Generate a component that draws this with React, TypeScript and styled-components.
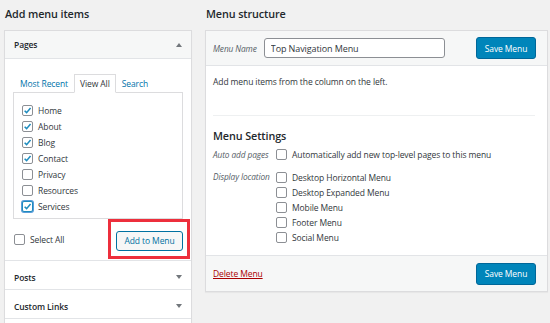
import React from 'react';
import styled, { createGlobalStyle, css } from 'styled-components';

const GlobalStyle = createGlobalStyle`
  body {
    margin: 0;
    background: #f1f1f1;
    font-family: "Open Sans", "Noto Sans", sans-serif;
    color: #23282d;
    letter-spacing: -0.1px;
    overflow: hidden;
  }
`;

const Page = styled.div`
  display: flex;
  align-items: flex-start;
  gap: 13px;
  padding: 0 2px 0 4px;
`;

const Column = styled.div<{ $width: number }>`
  width: ${(p) => p.$width}px;
  display: flex;
  flex-direction: column;
`;

const Title = styled.h2`
  margin: 0;
  height: 30px;
  padding: 5px 0 0 1px;
  box-sizing: border-box;
  font-size: 10.8px;
  font-weight: 600;
  line-height: 18px;
`;

const Box = styled.div`
  background: #fff;
  border: 1px solid #dcdcde;
  box-shadow: 0 1px 1px rgba(0, 0, 0, 0.04);
`;

const SectionHead = styled.div<{ $shaded?: boolean }>`
  display: flex;
  align-items: center;
  justify-content: space-between;
  height: ${(p) => (p.$shaded ? 28 : 29)}px;
  box-sizing: border-box;
  padding: ${(p) => (p.$shaded ? '0 9px' : '4px 9px 0')};
  font-size: 8.5px;
  font-weight: 600;
  background: ${(p) => (p.$shaded ? '#f6f7f7' : '#fff')};
  border-bottom: 1px solid #e2e4e7;
`;

/* top strip of the next collapsed section, cut off by the frame */
const NextSection = styled.div`
  height: 6px;
`;

const Arrow = styled.span<{ $up?: boolean }>`
  width: 0;
  height: 0;
  border-left: 3px solid transparent;
  border-right: 3px solid transparent;
  ${(p) =>
    p.$up
      ? css`border-bottom: 4px solid #72777c;`
      : css`border-top: 4px solid #72777c;`}
`;

const PagesBody = styled.div`
  padding: 15px 8px 0 8px;
  border-bottom: 1px solid #e2e4e7;
`;

const Tabs = styled.div`
  display: flex;
  align-items: flex-end;
  height: 18px;
  padding-left: 3px;
  font-size: 8.5px;
`;

const Tab = styled.span<{ $active?: boolean }>`
  height: 17px;
  line-height: 17px;
  padding: 0 4px;
  color: #0073aa;
  ${(p) =>
    p.$active &&
    css`
      color: #32373c;
      border: 1px solid #dcdcde;
      border-bottom: 1px solid #fff;
      margin: 0 2px -1px 2px;
      padding: 0 5px;
      position: relative;
      background: #fff;
    `}
`;

const TabPanel = styled.div`
  border: 1px solid #dcdcde;
  height: 127px;
  box-sizing: border-box;
  padding: 9px 0 0 8px;
  width: 170px;
`;

const CheckRow = styled.label<{ $h: number }>`
  display: flex;
  align-items: center;
  gap: 5px;
  height: ${(p) => p.$h}px;
  font-size: 8.5px;
  color: #32373c;
`;

const Box11 = styled.span<{ $focus?: boolean }>`
  width: 11px;
  height: 11px;
  box-sizing: border-box;
  border: 1px solid ${(p) => (p.$focus ? '#1e8cbe' : '#8c8f94')};
  border-radius: 2px;
  background: #fff;
  display: flex;
  align-items: center;
  justify-content: center;
  flex-shrink: 0;
  ${(p) => p.$focus && css`box-shadow: 0 0 0 1px #5b9dd9;`}
`;

const Check = ({ on, focus }: { on?: boolean; focus?: boolean }) => (
  <Box11 $focus={focus}>
    {on && (
      <svg width="9" height="9" viewBox="0 0 10 10">
        <path d="M1.8 5.2 L4 7.4 L8.4 2.2" fill="none" stroke="#1e8cbe" strokeWidth="1.7" />
      </svg>
    )}
  </Box11>
);

const PanelFooter = styled.div`
  display: flex;
  align-items: center;
  justify-content: space-between;
  height: 41px;
  padding: 0 0 0 1px;
`;

const Highlight = styled.div`
  border: 3px solid #ed2f3c;
  padding: 5px 4px 5px 5px;
  margin: -1px -7px 0 0;
`;

const GhostButton = styled.button`
  height: 20px;
  width: 67px;
  padding: 0;
  background: #f6f7f7;
  border: 1px solid #0071a1;
  border-radius: 3px;
  color: #0071a1;
  font-family: inherit;
  font-size: 8.5px;
  letter-spacing: -0.1px;
`;

const PrimaryButton = styled.button`
  height: 22px;
  width: 60px;
  padding: 0;
  background: #0085ba;
  border: 1px solid #006799;
  border-radius: 3px;
  color: #fff;
  font-family: inherit;
  font-size: 8.5px;
  letter-spacing: -0.1px;
`;

const Bar = styled.div<{ $top?: boolean }>`
  display: flex;
  align-items: center;
  justify-content: space-between;
  background: #f6f7f7;
  padding: 0 11px 0 7px;
  ${(p) =>
    p.$top
      ? css`height: 34px; border-bottom: 1px solid #e2e4e7;`
      : css`height: 35px; border-top: 1px solid #e2e4e7;`}
`;

const NameGroup = styled.div`
  display: flex;
  align-items: center;
  gap: 7px;
`;

const Muted = styled.span`
  font-style: italic;
  font-size: 8.3px;
  color: #555d66;
`;

const NameInput = styled.input`
  width: 181px;
  height: 20px;
  box-sizing: border-box;
  border: 1px solid #8c8f94;
  border-radius: 3px;
  padding: 0 6px;
  font-family: inherit;
  font-size: 9px;
  letter-spacing: -0.1px;
  color: #32373c;
`;

const Body = styled.div`
  padding: 0 12px 0 7px;
  height: 189px;
  box-sizing: border-box;
`;

const Intro = styled.p`
  margin: 0;
  padding: 10px 0 0;
  height: 50px;
  box-sizing: border-box;
  font-size: 8.5px;
  color: #32373c;
  border-bottom: 1px solid #eef0f1;
`;

const SubTitle = styled.h3`
  margin: 0;
  padding: 12px 0 0;
  height: 31px;
  box-sizing: border-box;
  font-size: 10.8px;
  font-weight: 600;
`;

const SettingRow = styled.div`
  display: grid;
  grid-template-columns: 63px 1fr;
  align-items: start;
  margin-bottom: 7px;
`;

const SettingLabel = styled(Muted)`
  line-height: 15px;
`;

const LocationList = styled.div`
  display: flex;
  flex-direction: column;
  padding-top: 1px;
`;

const DeleteLink = styled.a`
  color: #a00;
  font-size: 8.5px;
  text-decoration: underline;
`;

const pages = [
  { name: 'Home', on: true },
  { name: 'About', on: true },
  { name: 'Blog', on: true },
  { name: 'Contact', on: true },
  { name: 'Privacy', on: false },
  { name: 'Resources', on: false },
  { name: 'Services', on: true, focus: true },
];

const locations = [
  'Desktop Horizontal Menu',
  'Desktop Expanded Menu',
  'Mobile Menu',
  'Footer Menu',
  'Social Menu',
];

export default function App() {
  return (
    <>
      <GlobalStyle />
      <Page>
        <Column $width={188}>
          <Title>Add menu items</Title>
          <Box>
            <SectionHead $shaded>
              Pages <Arrow $up />
            </SectionHead>
            <PagesBody>
              <Tabs>
                <Tab>Most Recent</Tab>
                <Tab $active>View All</Tab>
                <Tab>Search</Tab>
              </Tabs>
              <TabPanel>
                {pages.map((p) => (
                  <CheckRow key={p.name} $h={16}>
                    <Check on={p.on} focus={p.focus} />
                    {p.name}
                  </CheckRow>
                ))}
              </TabPanel>
              <PanelFooter>
                <CheckRow $h={16}>
                  <Check />
                  Select All
                </CheckRow>
                <Highlight>
                  <GhostButton>Add to Menu</GhostButton>
                </Highlight>
              </PanelFooter>
            </PagesBody>
            <SectionHead>
              Posts <Arrow />
            </SectionHead>
            <SectionHead>
              Custom Links <Arrow />
            </SectionHead>
            <NextSection />
          </Box>
        </Column>
        <Column $width={343}>
          <Title>Menu structure</Title>
          <Box>
            <Bar $top>
              <NameGroup>
                <Muted>Menu Name</Muted>
                <NameInput defaultValue="Top Navigation Menu" />
              </NameGroup>
              <PrimaryButton>Save Menu</PrimaryButton>
            </Bar>
            <Body>
              <Intro>Add menu items from the column on the left.</Intro>
              <SubTitle>Menu Settings</SubTitle>
              <SettingRow>
                <SettingLabel>Auto add pages</SettingLabel>
                <CheckRow $h={15}>
                  <Check />
                  Automatically add new top-level pages to this menu
                </CheckRow>
              </SettingRow>
              <SettingRow>
                <SettingLabel>Display location</SettingLabel>
                <LocationList>
                  {locations.map((l) => (
                    <CheckRow key={l} $h={15}>
                      <Check />
                      {l}
                    </CheckRow>
                  ))}
                </LocationList>
              </SettingRow>
            </Body>
            <Bar>
              <DeleteLink href="#">Delete Menu</DeleteLink>
              <PrimaryButton>Save Menu</PrimaryButton>
            </Bar>
          </Box>
        </Column>
      </Page>
    </>
  );
}
